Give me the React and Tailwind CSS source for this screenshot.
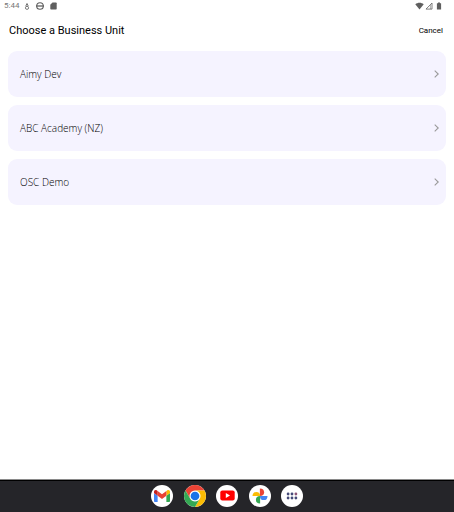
import React from 'react';

const units = [
  { id: 1, name: 'Aimy Dev' },
  { id: 2, name: 'ABC Academy (NZ)' },
  { id: 3, name: 'OSC Demo' },
];

const StatusBar = () => (
  <div className="flex h-3 items-center justify-between pl-1 pr-3 text-[#5f5f5f]">
    <div className="flex items-center">
      <span className="w-[19px] font-['Roboto',sans-serif] text-[8px] leading-3 text-[#777777]">5:44</span>
      <svg className="h-[9px] w-2" viewBox="0 0 8 9" fill="none" stroke="currentColor" strokeWidth="0.8">
        <path d="M4 1v4M2.5 3.5 4 2l1.5 1.5" />
        <circle cx="4" cy="5.8" r="1.6" />
      </svg>
      <svg className="ml-[5px] h-2 w-2" viewBox="0 0 8 8" fill="none" stroke="currentColor">
        <circle cx="4" cy="4" r="3.3" strokeWidth="1.1" />
        <path d="M0 4h8" strokeWidth="1.3" />
      </svg>
      <svg className="ml-[6px] h-2 w-[7px]" viewBox="0 0 7 8" fill="currentColor">
        <path d="M2.5.5H6a.7.7 0 0 1 .7.7v5.6a.7.7 0 0 1-.7.7H1a.7.7 0 0 1-.7-.7V2.7z" />
      </svg>
    </div>
    <div className="flex items-center gap-px">
      <svg className="h-2 w-[9px]" viewBox="0 0 9 8" fill="currentColor">
        <path d="M.3 2.2C2.8.2 6.2.2 8.7 2.2L4.5 7.5z" />
      </svg>
      <svg className="h-2 w-2" viewBox="0 0 8 8" fill="none" stroke="currentColor" strokeWidth="0.8">
        <path d="M1 7.1 7 1v6.1z" />
        <path d="M5.4 3v4" strokeWidth="0.5" />
      </svg>
      <svg className="ml-[2px] h-2 w-[6px]" viewBox="0 0 6 8" fill="currentColor">
        <path d="M2 .4h2v.8h1.1v6.4H.9V1.2H2z" />
      </svg>
    </div>
  </div>
);

const GmailIcon = () => (
  <svg className="h-3 w-4" viewBox="52 42 88 66">
    <path fill="#4285f4" d="M58 108h14V74L52 59v43c0 3.32 2.69 6 6 6" />
    <path fill="#34a853" d="M120 108h14c3.32 0 6-2.69 6-6V59l-20 15" />
    <path fill="#fbbc04" d="M120 48v26l20-15v-8c0-7.42-8.47-11.65-14.4-7.2" />
    <path fill="#ea4335" d="M72 74V48l24 18 24-18v26L96 92" />
    <path fill="#c5221f" d="M52 51v8l20 15V48l-5.6-4.2c-5.94-4.45-14.4-.22-14.4 7.2" />
  </svg>
);

const ChromeIcon = () => (
  <svg className="h-[22px] w-[22px]" viewBox="0 0 48 48">
    <circle cx="24" cy="24" r="12" fill="#fff" />
    <path fill="#ea4335" d="M3.22 12a24 24 0 0 1 41.56 0H24a12 12 0 0 0-10.39 18z" />
    <path fill="#fbbc04" d="M44.78 12A24 24 0 0 1 24 48l10.39-18A12 12 0 0 0 24 12z" />
    <path fill="#34a853" d="M24 48A24 24 0 0 1 3.22 12l10.39 18a12 12 0 0 0 20.78 0z" />
    <circle cx="24" cy="24" r="9.5" fill="#1a73e8" />
  </svg>
);

const YouTubeIcon = () => (
  <svg className="h-[11px] w-[15px]" viewBox="0 0 15 11">
    <rect x="0.3" y="0.4" width="14.4" height="10.2" rx="2" fill="#ff0000" />
    <path d="M5.8 3v5l4.2-2.5z" fill="#fff" />
  </svg>
);

const PhotosIcon = () => (
  <svg className="h-4 w-4" viewBox="0 0 16 16">
    <path fill="#ea4335" d="M7.9.5a4.2 3.8 0 0 1 0 7.6z" />
    <path fill="#4285f4" d="M15.5 7.9a3.8 4.2 0 0 1-7.6 0z" />
    <path fill="#34a853" d="M8.1 15.5a4.2 3.8 0 0 1 0-7.6z" />
    <path fill="#fbbc04" d="M.5 8.1a3.8 4.2 0 0 1 7.6 0z" />
  </svg>
);

const AppsIcon = () => (
  <svg className="h-3 w-3" viewBox="0 0 12 12">
    <g fill="#454a78">
      <circle cx="2.1" cy="4" r="1.4" />
      <circle cx="6" cy="4" r="1.4" />
      <circle cx="2.1" cy="8" r="1.4" />
      <circle cx="6" cy="8" r="1.4" />
      <circle cx="9.9" cy="8" r="1.4" />
    </g>
    <circle cx="9.9" cy="4" r="1.4" fill="#8b5578" />
  </svg>
);

const dockApps = [
  { label: 'Gmail', Icon: GmailIcon },
  { label: 'Chrome', Icon: ChromeIcon },
  { label: 'YouTube', Icon: YouTubeIcon },
  { label: 'Photos', Icon: PhotosIcon },
  { label: 'All apps', Icon: AppsIcon },
];

const App = () => {
  return (
    <div className="flex min-h-screen flex-col bg-white">
      <StatusBar />
      <header className="flex items-center justify-between pl-[9px] pr-[11px] pt-[11px]">
        <h1 className="font-['Roboto',sans-serif] text-[11px] font-normal leading-4 text-black">Choose a Business Unit</h1>
        <button type="button" className="font-['Roboto',sans-serif] text-[8px] font-normal leading-4 text-black">
          Cancel
        </button>
      </header>

      <main className="flex-1 px-2 pt-3">
        <ul className="space-y-2">
          {units.map((unit) => (
            <li key={unit.id}>
              <button
                type="button"
                className="flex h-[46px] w-full items-center justify-between rounded-[9px] bg-[#f5f3ff] pl-3 pr-[7px] text-left"
              >
                <span className="font-['Open_Sans',sans-serif] text-[10px] font-light leading-4 text-black">{unit.name}</span>
                <svg className="h-2 w-[5px]" viewBox="0 0 5 8" fill="none" stroke="#999999" strokeWidth="1.1">
                  <path d="M.7.7 4.2 4 .7 7.3" />
                </svg>
              </button>
            </li>
          ))}
        </ul>
      </main>

      {/* System dock */}
      <nav className="flex h-[33px] justify-center border-t border-[#8a8a8a] bg-[#252529]">
        <div className="flex w-full justify-center border-t border-black pb-[2px]">
          <div className="flex w-[152px] items-center justify-between">
            {dockApps.map(({ label, Icon }) => (
              <button
                key={label}
                type="button"
                aria-label={label}
                className="flex h-[22px] w-[22px] items-center justify-center rounded-full bg-white"
              >
                <Icon />
              </button>
            ))}
          </div>
        </div>
      </nav>
    </div>
  );
};

export default App;
